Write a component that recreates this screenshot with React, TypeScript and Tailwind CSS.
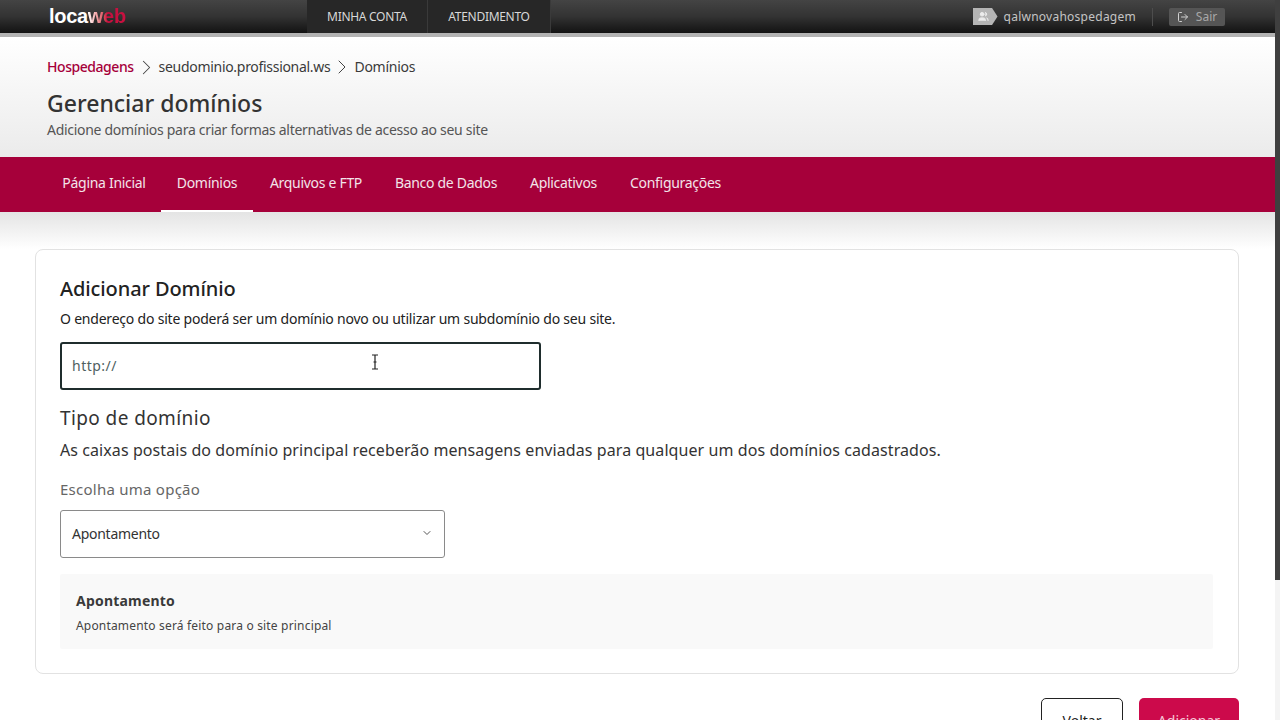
import React from "react";
import { ChevronDown, ChevronRight, LogOut, Users } from "lucide-react";

const font = { fontFamily: '"Noto Sans", sans-serif' };

const tabs = [
  { label: "Página Inicial", width: "w-[114px]" },
  { label: "Domínios", width: "w-[92px]" },
  { label: "Arquivos e FTP", width: "w-[126px]" },
  { label: "Banco de Dados", width: "w-[134px]" },
  { label: "Aplicativos", width: "w-[101px]" },
  { label: "Configurações", width: "w-[123px]" },
];

function TopBar() {
  return (
    <div className="flex h-[37px] shrink-0 border-b-[4px] border-[#b3b3b3] bg-gradient-to-b from-[#444444] via-[#333333] to-[#131313]">
      <div className="flex h-[33px] w-[307px] items-center pl-[49px] pb-[1px] font-['Liberation_Sans',sans-serif] text-[20px] font-bold tracking-[-0.3px] text-white">
        <span>loca</span>
        <span className="bg-gradient-to-r from-white via-[#c8103f] to-[#c8103f] bg-clip-text text-transparent">web</span>
      </div>
      <div className="flex h-[33px] text-[12px] tracking-[-0.3px] text-[#d8d8d8]">
        <div className="flex w-[121px] items-center justify-center border-r border-[#3a3a3a] bg-[#272727]">MINHA CONTA</div>
        <div className="flex w-[123px] items-center justify-center border-r border-[#3a3a3a] bg-[#272727]">ATENDIMENTO</div>
      </div>
      <div className="ml-auto flex h-[33px] items-center pr-[50px] text-[12px] text-[#c4c4c4]">
        <div className="flex h-[17px] w-[25px] items-center justify-center bg-[#b5b5b5] pr-[3px] [clip-path:polygon(0_0,78%_0,100%_50%,78%_100%,0_100%)]">
          <Users size={11} fill="currentColor" className="text-[#ececec]" />
        </div>
        <span className="ml-[6px] tracking-[0.25px]">qalwnovahospedagem</span>
        <span className="mx-[16px] h-[18px] w-px bg-[#4d4d4d]" />
        <div className="flex h-[18px] w-[56px] items-center justify-center gap-[7px] rounded-[2px] bg-[#555555] text-[#a8a8a8]">
          <LogOut size={12} className="text-[#d0d0d0]" />
          <span>Sair</span>
        </div>
      </div>
    </div>
  );
}

function PageHead() {
  return (
    <div className="h-[120px] shrink-0 bg-gradient-to-b from-white to-[#ebebeb] pl-[47px] pt-[21px]">
      <div className="flex items-center text-[14px] leading-[18px] text-[#3a3a3a]">
        <span className="font-medium tracking-[-0.45px] text-[#a6003a]">Hospedagens</span>
        <ChevronRight size={25} strokeWidth={1} className="-my-[4px] text-[#444444]" />
        <span className="tracking-[-0.3px]">seudominio.profissional.ws</span>
        <ChevronRight size={24} strokeWidth={1} className="-my-[4px] text-[#444444]" />
        <span className="tracking-[-0.25px]">Domínios</span>
      </div>
      <h1 className="mt-[13px] text-[23px] font-medium leading-[28px] text-[#333333]">Gerenciar domínios</h1>
      <p className="mt-[4px] text-[14px] leading-[18px] tracking-[-0.29px] text-[#555555]">Adicione domínios para criar formas alternativas de acesso ao seu site</p>
    </div>
  );
}

function NavTabs() {
  return (
    <div className="flex h-[55px] shrink-0 bg-[#a6003a] pl-[47px] text-[14px] tracking-[-0.3px] text-[#f3e3e9]">
      {tabs.map((t) => (
        <div
          key={t.label}
          className={`flex items-center justify-center border-b-[2px] pb-[3px] ${t.width} ${t.label === "Domínios" ? "border-white" : "border-transparent"}`}
        >
          {t.label}
        </div>
      ))}
    </div>
  );
}

function DomainCard() {
  return (
    <div className="ml-[35px] mr-[36px] h-[425px] shrink-0 rounded-[8px] border border-[#e2e2e2] bg-white pl-[24px] pr-[25px] pt-[26px]">
      <h2 className="text-[20px] font-medium leading-[26px] tracking-[-0.1px] text-[#222222]">Adicionar Domínio</h2>
      <p className="mt-[7px] text-[14px] leading-[20px] tracking-[-0.21px] text-[#222222]">O endereço do site poderá ser um domínio novo ou utilizar um subdomínio do seu site.</p>
      <div className="relative mt-[13px] flex h-[48px] w-[481px] items-center rounded-[3px] border-[2px] border-[#1f2d2d] pb-[2px] pl-[10px] text-[14px] tracking-[0.5px] text-[#4f5f5f]">
        http://
        {/* text cursor over the field */}
        <svg className="absolute left-[309px] top-[10px]" width="8" height="16" viewBox="0 0 8 16" fill="none" stroke="#222222" strokeWidth="1.2">
          <path d="M1 1h6M1 15h6M4 1v14M2.5 8h3" />
        </svg>
      </div>
      <h3 className="mt-[14px] text-[19px] leading-[28px] tracking-[0.4px] text-[#333333]">Tipo de domínio</h3>
      <p className="mt-[6px] text-[16px] leading-[24px] tracking-[0.08px] text-[#333333]">As caixas postais do domínio principal receberão mensagens enviadas para qualquer um dos domínios cadastrados.</p>
      <div className="mt-[15px] text-[15px] leading-[24px] tracking-[0.25px] text-[#666666]">Escolha uma opção</div>
      <div className="mt-[9px] flex h-[48px] w-[385px] items-center justify-between rounded-[3px] border border-[#8a8a8a] pb-[2px] pl-[11px] pr-[11px] text-[14px] tracking-[-0.27px] text-[#333333]">
        Apontamento
        <ChevronDown size={12} className="text-[#555555]" />
      </div>
      <div className="mt-[16px] h-[75px] rounded-[2px] bg-[#f9f9f9] pl-[16px] pt-[17px]">
        <div className="text-[14px] font-bold leading-[20px] tracking-[0.2px] text-[#3a3a3a]">Apontamento</div>
        <div className="mt-[6px] text-[12px] leading-[18px] tracking-[0.18px] text-[#444444]">Apontamento será feito para o site principal</div>
      </div>
    </div>
  );
}

export default function App() {
  return (
    <div className="flex h-[720px] w-[1280px] overflow-hidden bg-white" style={font}>
      <div className="flex w-[1275px] shrink-0 flex-col">
        <TopBar />
        <PageHead />
        <NavTabs />
        <div className="h-[37px] shrink-0 bg-gradient-to-b from-[#e4e4e4] to-white" />
        <DomainCard />
        <div className="mr-[36px] mt-[24px] flex shrink-0 justify-end gap-[16px] text-[14px]">
          <div className="flex h-[48px] w-[82px] items-center justify-center rounded-[5px] border border-[#222222] bg-white pb-[3px] text-[#222222]">Voltar</div>
          <div className="flex h-[48px] w-[100px] items-center justify-center rounded-[5px] bg-[#cc0a4b] pb-[3px] text-[#f6c9d8]">Adicionar</div>
        </div>
      </div>
      <div className="flex w-[5px] shrink-0 flex-col">
        <div className="h-[580px] bg-[#3f3f3f]" />
        <div className="flex-1 bg-[#f4f4f4]" />
      </div>
    </div>
  );
}
